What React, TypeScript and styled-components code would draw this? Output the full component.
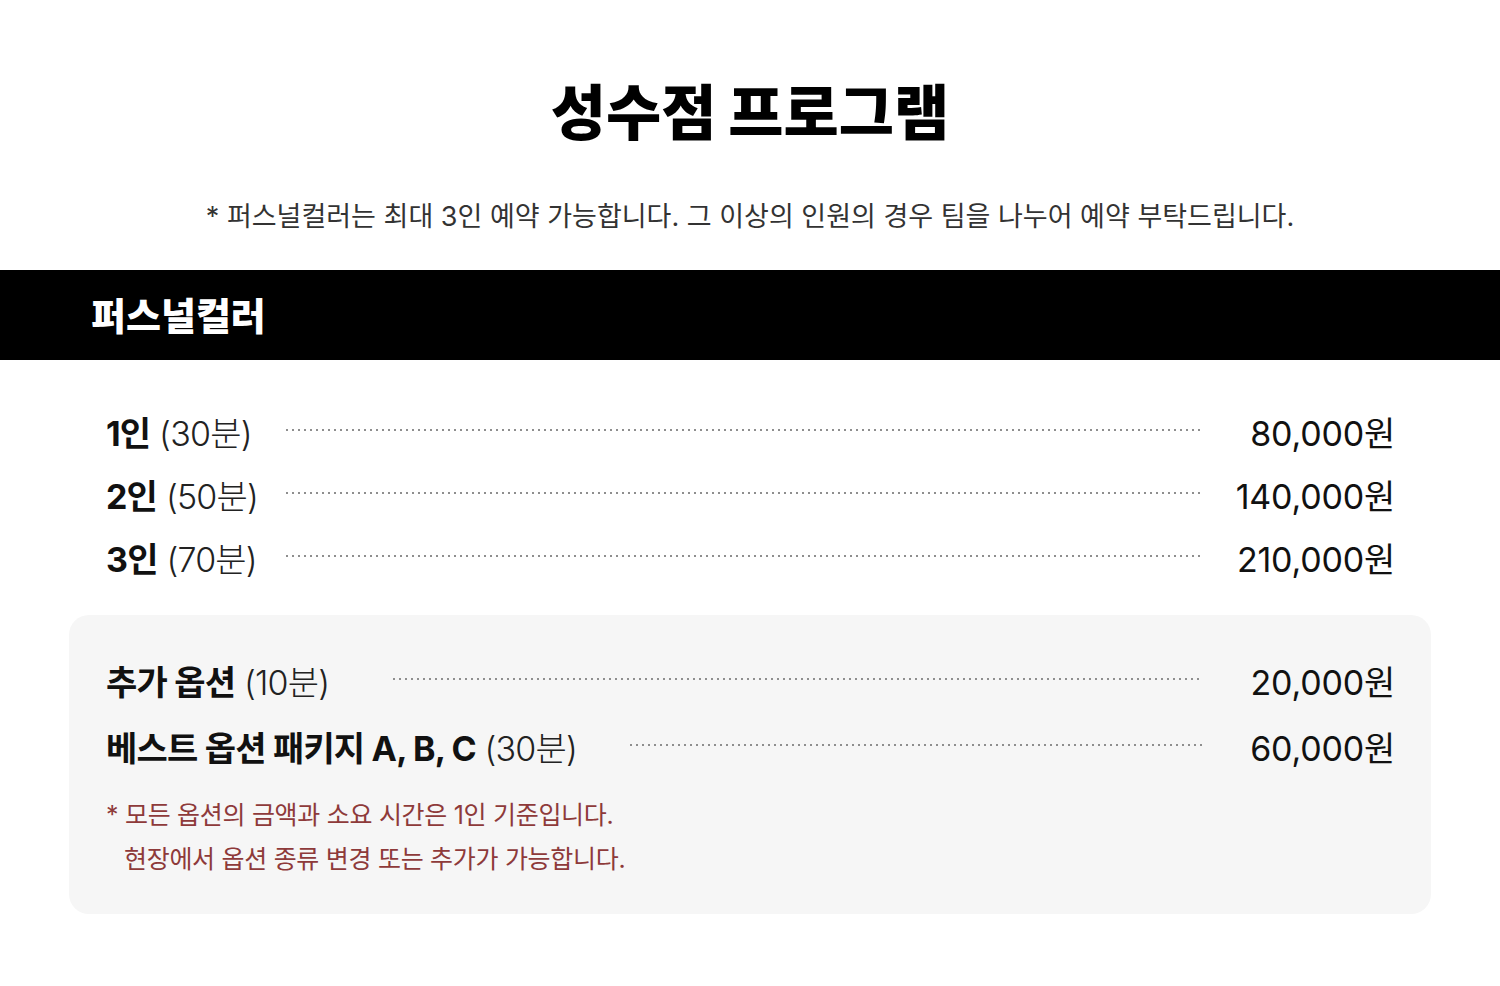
import React from "react";
import styled, { createGlobalStyle } from "styled-components";

const GlobalStyle = createGlobalStyle`
  html, body { margin: 0; padding: 0; background: #ffffff; }
  body {
    font-family: "Inter", "Noto Sans CJK KR", "Noto Sans", sans-serif;
    color: #111111;
    -webkit-font-smoothing: antialiased;
  }
  * { box-sizing: border-box; }
`;

const Page = styled.main`
  width: 100%;
  padding-bottom: 72px;
`;

const Header = styled.header`
  display: flex;
  flex-direction: column;
  align-items: center;
  padding-top: 77px;
`;

const Title = styled.h1`
  margin: 0;
  font-size: 60px;
  line-height: 72px;
  font-weight: 900;
  letter-spacing: 0;
  color: #000;
`;

const Subtitle = styled.p`
  margin: 50px 0 0;
  font-size: 27px;
  line-height: 36px;
  font-weight: 400;
  letter-spacing: 0;
  color: #333;
`;

const Banner = styled.div`
  margin-top: 35px;
  height: 90px;
  background: #000;
  display: flex;
  align-items: center;
  padding-left: 91px;
`;

const BannerTitle = styled.h2`
  margin: -4px 0 0;
  font-size: 38px;
  font-weight: 800;
  letter-spacing: 0;
  color: #fff;
`;

const PriceList = styled.section`
  padding: 40px 107px 0 106px;
`;

const Row = styled.div<{ $height: number; $labelWidth: number }>`
  display: grid;
  grid-template-columns: ${(p) => p.$labelWidth}px 1fr 191px;
  align-items: center;
  height: ${(p) => p.$height}px;
`;

const Label = styled.div`
  font-size: 34px;
  letter-spacing: -0.8px;
  white-space: nowrap;
  color: #111;
`;

const Strong = styled.span`
  font-weight: 700;
`;

const Light = styled.span`
  font-weight: 300;
  color: #222;
`;

const Dots = styled.div`
  height: 2px;
  margin-top: -3px;
  background-image: radial-gradient(circle, #8a8a8a 0.7px, transparent 0.9px);
  background-size: 6px 2px;
  background-repeat: repeat-x;
  background-position: 0 0;
`;

const Price = styled.div`
  text-align: right;
  font-size: 34px;
  font-weight: 400;
  letter-spacing: -0.2px;
  margin-right: -2px;
  color: #111;
`;

const OptionBox = styled.section`
  margin: 26px 69px 0;
  background: #f6f6f6;
  border-radius: 20px;
  padding: 32px 38px 33px 37px;
`;

const Notes = styled.div`
  margin-top: 14px;
  color: #8e3a3a;
  font-size: 25px;
  line-height: 44px;
  letter-spacing: -0.3px;
`;

const NoteLine = styled.div<{ $indent?: boolean }>`
  padding-left: ${(p) => (p.$indent ? "18px" : "0")};
`;

type Item = { name: string; time: string; price: string; labelWidth: number };

const baseItems: Item[] = [
  { name: "1인", time: "(30분)", price: "80,000원", labelWidth: 178 },
  { name: "2인", time: "(50분)", price: "140,000원", labelWidth: 178 },
  { name: "3인", time: "(70분)", price: "210,000원", labelWidth: 178 },
];

const optionItems: Item[] = [
  { name: "추가 옵션", time: "(10분)", price: "20,000원", labelWidth: 285 },
  { name: "베스트 옵션 패키지 A, B, C", time: "(30분)", price: "60,000원", labelWidth: 522 },
];

const PriceRow = ({ item, height }: { item: Item; height: number }) => (
  <Row $height={height} $labelWidth={item.labelWidth}>
    <Label>
      <Strong>{item.name}</Strong> <Light>{item.time}</Light>
    </Label>
    <Dots />
    <Price>{item.price}</Price>
  </Row>
);

export default function App() {
  return (
    <>
      <GlobalStyle />
      <Page>
        <Header>
          <Title>성수점 프로그램</Title>
          <Subtitle>
            * 퍼스널컬러는 최대 3인 예약 가능합니다. 그 이상의 인원의 경우 팀을 나누어 예약 부탁드립니다.
          </Subtitle>
        </Header>
        <Banner>
          <BannerTitle>퍼스널컬러</BannerTitle>
        </Banner>
        <PriceList>
          {baseItems.map((it) => (
            <PriceRow key={it.name} item={it} height={63} />
          ))}
        </PriceList>
        <OptionBox>
          {optionItems.map((it) => (
            <PriceRow key={it.name} item={it} height={66} />
          ))}
          <Notes>
            <NoteLine>* 모든 옵션의 금액과 소요 시간은 1인 기준입니다.</NoteLine>
            <NoteLine $indent>현장에서 옵션 종류 변경 또는 추가가 가능합니다.</NoteLine>
          </Notes>
        </OptionBox>
      </Page>
    </>
  );
}
